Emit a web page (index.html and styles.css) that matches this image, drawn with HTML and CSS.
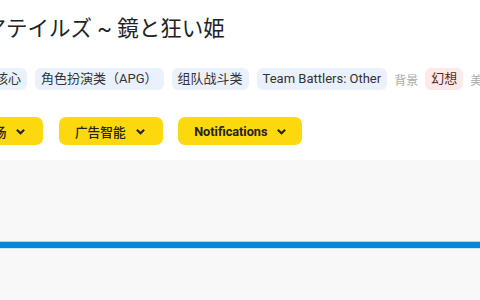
FILE: index.html
```html
<!DOCTYPE html>
<html lang="ja">
<head>
  <meta charset="UTF-8"/>
  <meta name="viewport" content="width=device-width, initial-scale=1.0"/>
  <title>ルナリアテイルズ ~ 鏡と狂い姫</title>
  <link rel="stylesheet" href="styles.css">
</head>
<body>

  <!-- Game header -->
  <div class="header">
    <h1 class="title">ルナリアテイルズ<span class="tilde"> ~ </span>鏡と狂い姫</h1>

    <div class="tags">
      <span class="tag">休闲核心</span>
      <span class="tag">角色扮演类（APG）</span>
      <span class="tag">组队战斗类</span>
      <span class="tag">Team Battlers: Other</span>
      <span class="label">背景</span>
      <span class="tag pink">幻想</span>
      <span class="label">美术</span>
    </div>

    <div class="menus">
      <button class="menu zh">市场
        <svg viewBox="0 0 12 12"><path d="M2 4l4 4 4-4"/></svg>
      </button>
      <button class="menu zh">广告智能
        <svg viewBox="0 0 12 12"><path d="M2 4l4 4 4-4"/></svg>
      </button>
      <button class="menu">Notifications
        <svg viewBox="0 0 12 12"><path d="M2 4l4 4 4-4"/></svg>
      </button>
    </div>
  </div>

  <!-- Content area -->
  <div class="panel">
    <div class="progress"></div>
  </div>

</body>
</html>
```

FILE: styles.css
```css
* {
  box-sizing: border-box;
  margin: 0; padding: 0;
}

body {
  background: #fff;
  font-family: Roboto, "Noto Sans CJK SC", sans-serif;
  color: #222;
  overflow: hidden;
  height: 300px;
}

.header {
  padding-top: 12px;
}

.title {
  font-family: "Noto Sans CJK JP", sans-serif;
  font-weight: 400;
  font-size: 21.5px;
  line-height: 30px;
  height: 30px;
  white-space: pre;
  margin-left: -80px;
}

.title .tilde {
  font-family: Roboto, sans-serif;
  line-height: 0;
}

.tags {
  display: flex;
  align-items: center;
  gap: 8px;
  margin-top: 26px;
  margin-left: -37px;
  white-space: nowrap;
}

.tag {
  background: #ebf1fc;
  color: #333;
  font-size: 13px;
  line-height: 22px;
  padding: 0 6px;
  border-radius: 6px;
}

.tag.pink {
  background: #fde9e9;
  color: #5a2626;
}

.label {
  color: #aaa;
  font-size: 12px;
  margin: 0 -1px;
}

.menus {
  display: flex;
  gap: 15.5px;
  margin-top: 27px;
  margin-left: -35px;
}

.menu {
  display: flex;
  align-items: center;
  gap: 9px;
  height: 28px;
  padding: 0 15px 0 16px;
  background: #fcd80f;
  border: none;
  border-radius: 7px;
  font-family: Roboto, "Noto Sans CJK SC", sans-serif;
  font-weight: 700;
  font-size: 12.7px;
  color: #222;
  white-space: nowrap;
}

.menu.zh {
  font-weight: 500;
  padding-right: 17px;
}

.menu svg {
  width: 11px;
  height: 11px;
  fill: none;
  stroke: #222;
  stroke-width: 2.2;
}

.panel {
  margin-top: 15px;
  height: 140px;
  background: #f8f8f8;
  padding-top: 81px;
}

.progress {
  height: 8px;
  background: #0288d8;
  border-top: 1px solid #9fd6f5;
  border-bottom: 1px solid #c8e8fa;
}
```
